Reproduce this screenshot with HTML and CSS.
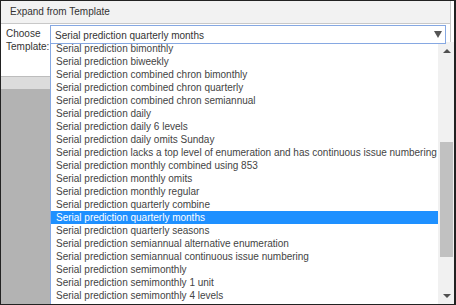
FILE: index.html
```html
<!DOCTYPE html>
<html lang="en">
<head>
  <meta charset="UTF-8">
  <title>Expand from Template</title>
  <link rel="stylesheet" href="styles.css">
</head>
<body>
  <div class="frame">
    <div class="dialog">
      <div class="dialog--head">Expand from Template</div>
      <div class="dialog--body">
        <label class="dialog--label">Choose Template:</label>
        <div class="combo">
          <div class="combo--box">
            <span class="combo--value">Serial prediction quarterly months</span>
            <span class="combo--arrow"></span>
          </div>
          <div class="combo--list">
            <ul class="combo--items">
              <li>Serial prediction bimonthly</li>
              <li>Serial prediction biweekly</li>
              <li>Serial prediction combined chron bimonthly</li>
              <li>Serial prediction combined chron quarterly</li>
              <li>Serial prediction combined chron semiannual</li>
              <li>Serial prediction daily</li>
              <li>Serial prediction daily 6 levels</li>
              <li>Serial prediction daily omits Sunday</li>
              <li>Serial prediction lacks a top level of enumeration and has continuous issue numbering</li>
              <li>Serial prediction monthly combined using 853</li>
              <li>Serial prediction monthly omits</li>
              <li>Serial prediction monthly regular</li>
              <li>Serial prediction quarterly combine</li>
              <li class="is-selected">Serial prediction quarterly months</li>
              <li>Serial prediction quarterly seasons</li>
              <li>Serial prediction semiannual alternative enumeration</li>
              <li>Serial prediction semiannual continuous issue numbering</li>
              <li>Serial prediction semimonthly</li>
              <li>Serial prediction semimonthly 1 unit</li>
              <li>Serial prediction semimonthly 4 levels</li>
            </ul>
            <div class="scrollbar">
              <div class="scrollbar--btn"><span class="scrollbar--up"></span></div>
              <div class="scrollbar--track"><div class="scrollbar--thumb"></div></div>
              <div class="scrollbar--btn"><span class="scrollbar--down"></span></div>
            </div>
          </div>
        </div>
      </div>
      <div class="dialog--foot"></div>
    </div>
    <div class="shade"></div>
  </div>
</body>
</html>
```

FILE: styles.css
```css
html,body{margin: 0; padding: 0; background-color: #222; overflow: hidden; height: 100%; width: 100%;}
*{box-sizing: border-box;}

.frame {
  margin: 1px 0 0 1px;
  width: 453px;
  height: 303px;
  background-color: #fff;
  overflow: hidden;
  display: flex;
  flex-direction: column;
  font-family: "Liberation Sans", Arial, sans-serif;
  font-size: 10px;
  color: #333;
}
.dialog {
  width: 450px;
  border-right: 1px solid #c8c8c8;
  background-color: #fff;
}
.dialog--head {
  height: 23px;
  padding: 4px 0 0 9px;
  line-height: 13px;
  background-color: #f2f2f2;
  border-bottom: 1px solid #c8c8c8;
}
.dialog--body {
  display: flex;
  align-items: flex-start;
  height: 53px;
  padding: 1px 0 0 5px;
  border-bottom: 1px solid #bdbdbd;
}
.dialog--label {
  width: 44px;
  margin-top: 2px;
  line-height: 13px;
}
.dialog--foot {
  height: 12px;
  background-color: #dcdcdc;
}
.shade {
  flex: 1;
  background-color: #b3b3b3;
}

.combo {
  position: relative;
  width: 396px;
}
.combo--box {
  position: relative;
  z-index: 2;
  display: flex;
  justify-content: space-between;
  align-items: center;
  height: 19px;
  padding: 0 3px 0 4px;
  border: 1px solid #86a8e2;
  background-color: #fff;
  line-height: 13px;
}
.combo--value {padding-top: 1px;}
.combo--arrow {
  width: 0;
  height: 0;
  border-left: 4px solid transparent;
  border-right: 4px solid transparent;
  border-top: 7px solid #555;
}
.combo--list {
  position: absolute;
  z-index: 1;
  left: 0;
  top: 17px;
  width: 405px;
  height: 262px;
  display: flex;
  background-color: #fff;
  border-left: 1px solid #86a8e2;
}
.combo--items {
  flex: 1;
  min-width: 0;
  overflow: hidden;
  margin: 0;
  padding: 0;
  list-style: none;
}
.combo--items li {
  height: 13px;
  line-height: 13px;
  padding-left: 5px;
  white-space: nowrap;
  color: #444;
}
.combo--items li.is-selected {
  background-color: #1e90ff;
  color: #fff;
}

.scrollbar {
  flex: none;
  width: 17px;
  display: flex;
  flex-direction: column;
  background-color: #f1f1f1;
}
.scrollbar--btn {
  height: 17px;
  display: flex;
  justify-content: center;
  align-items: center;
}
.scrollbar--up, .scrollbar--down {
  width: 0;
  height: 0;
  border-left: 4px solid transparent;
  border-right: 4px solid transparent;
}
.scrollbar--up {border-bottom: 4px solid #505050;}
.scrollbar--down {border-top: 4px solid #505050;}
.scrollbar--track {flex: 1; padding: 0 2px;}
.scrollbar--thumb {
  margin-top: 83px;
  height: 115px;
  background-color: #c1c1c1;
}
```
